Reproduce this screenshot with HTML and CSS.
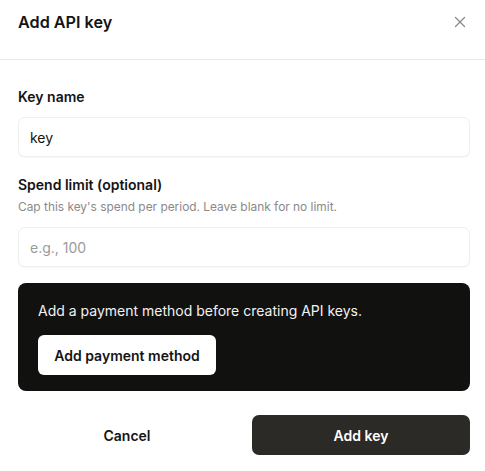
FILE: index.html
```html
<!DOCTYPE html>
<html lang="en">
<head>
<meta charset="utf-8">
<title>Add API key</title>
<link rel="stylesheet" href="styles.css">
</head>
<body>
<div class="dialog">
  <header class="header">
    <h2 class="title">Add API key</h2>
    <button class="close" aria-label="Close">
      <svg width="12" height="12" viewBox="0 0 12 12" fill="none" stroke="#8a8a8a" stroke-width="1.3" stroke-linecap="round"><path d="M1.5 1.5L10.5 10.5M10.5 1.5L1.5 10.5"/></svg>
    </button>
  </header>
  <div class="body">
    <label class="label label-first">Key name</label>
    <div class="input"><span class="value">key</span></div>
    <label class="label label-second">Spend limit (optional)</label>
    <p class="help">Cap this key's spend per period. Leave blank for no limit.</p>
    <div class="input"><span class="placeholder">e.g., 100</span></div>
    <div class="notice">
      <p class="notice-text">Add a payment method before creating API keys.</p>
      <button class="btn-white">Add payment method</button>
    </div>
    <div class="footer">
      <button class="btn-cancel">Cancel</button>
      <button class="btn-primary">Add key</button>
    </div>
  </div>
</div>
</body>
</html>
```
FILE: styles.css
```css
* { box-sizing: border-box; }
html, body { margin: 0; padding: 0; background: #fff; }
body {
  font-family: Inter, "Liberation Sans", sans-serif;
  color: #141414;
  width: 485px;
  height: 471px;
  overflow: hidden;
}
.dialog { width: 485px; }
.header {
  height: 60px;
  border-bottom: 1px solid #e8e8e8;
  display: flex;
  justify-content: space-between;
  align-items: flex-start;
  padding: 10px 19px 0 18px;
}
.title {
  margin: 0;
  font-size: 16.2px;
  line-height: 24px;
  font-weight: 600;
  color: #141414;
}
.close {
  border: 0;
  background: none;
  padding: 0;
  margin-top: 6px;
  width: 12px;
  height: 12px;
  display: flex;
}
.body {
  padding: 0 15px 0 18px;
  display: flex;
  flex-direction: column;
}
.label {
  font-size: 14px;
  font-weight: 600;
  line-height: 20px;
  color: #141414;
}
.label-first { margin-top: 27px; margin-bottom: 10px; }
.label-second { margin-top: 18px; }
.help {
  margin: 4px 0 12px;
  font-size: 11.9px;
  line-height: 16px;
  color: #8a8a8a;
}
.input {
  height: 40px;
  border: 1px solid #f0f0f0;
  border-radius: 7px;
  box-shadow: 0 1px 2px rgba(0,0,0,0.04);
  background: #fff;
  display: flex;
  align-items: center;
  padding: 0 11px;
  font-size: 14px;
}
.value { color: #141414; }
.placeholder { color: #9a9a9a; }
.notice {
  margin-top: 16px;
  background: #111110;
  border-radius: 8px;
  padding: 18px 20px 16px;
  display: flex;
  flex-direction: column;
  align-items: flex-start;
}
.notice-text {
  margin: 0;
  font-size: 14px;
  line-height: 20px;
  color: #f2f2f2;
}
.btn-white {
  margin-top: 14px;
  height: 40px;
  width: 178px;
  border: 0;
  border-radius: 6px;
  background: #fff;
  color: #141414;
  font-family: inherit;
  font-size: 14px;
  font-weight: 600;
}
.footer {
  margin-top: 24px;
  display: grid;
  grid-template-columns: 1fr 1fr;
  gap: 16px;
}
.btn-cancel, .btn-primary {
  height: 40px;
  border: 0;
  border-radius: 7px;
  font-family: inherit;
  font-size: 14px;
  font-weight: 600;
}
.btn-cancel { background: #fff; color: #141414; }
.btn-primary { background: #2c2a26; color: #fff; }
```
